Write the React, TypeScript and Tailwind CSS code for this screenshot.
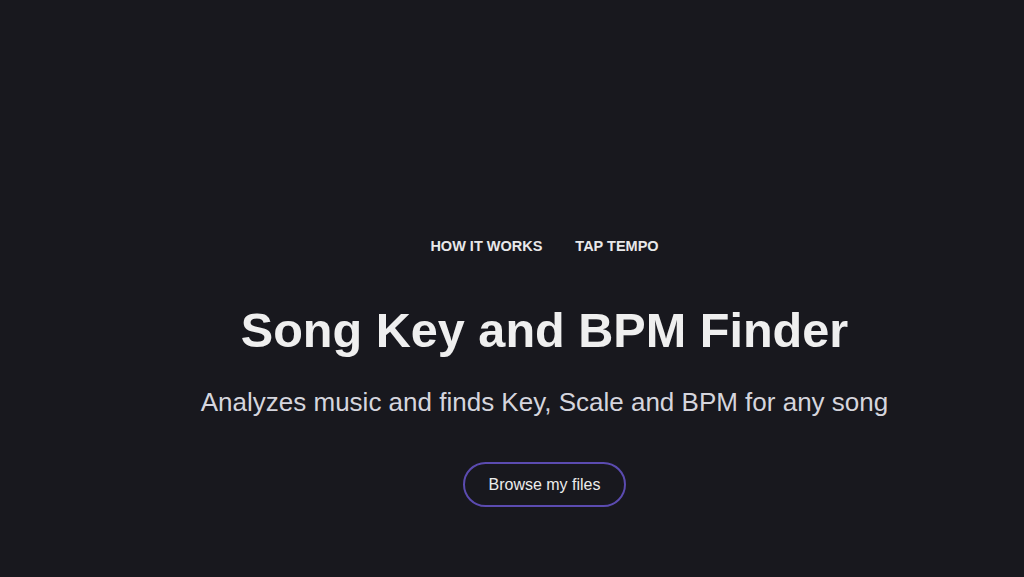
export default function App() {
  return (
    <div
      className="flex h-[577px] w-full flex-col items-center bg-[#18181e] pl-[65px] text-[#ececec]"
      style={{ fontFamily: '"Liberation Sans", Arial, sans-serif' }}
    >
      <nav className="mt-[237px] flex items-center gap-[33px] text-[14.5px] font-bold leading-[18px] text-[#e8e8ea]">
        <a href="#">HOW IT WORKS</a>
        <a href="#">TAP TEMPO</a>
      </nav>
      <h1 className="mt-[47px] text-[48.6px] font-bold leading-[56px] text-[#efefef]">Song Key and BPM Finder</h1>
      <p className="mt-[29px] text-[26px] leading-[30px] text-[#d5d5dd]">
        Analyzes music and finds Key, Scale and BPM for any song
      </p>
      <button className="mt-[45px] h-[45px] w-[163px] rounded-full border-2 border-[#5b4bb0] text-[16px] text-[#ececec]">
        Browse my files
      </button>
    </div>
  )
}
